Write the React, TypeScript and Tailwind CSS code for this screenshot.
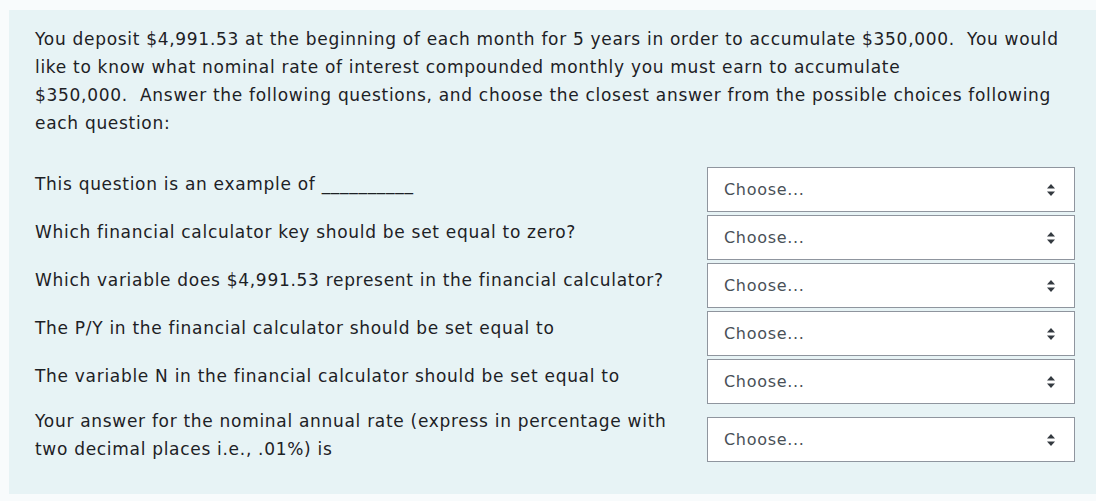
import React from 'react';

const questions = [
  'This question is an example of __________',
  'Which financial calculator key should be set equal to zero?',
  'Which variable does $4,991.53 represent in the financial calculator?',
  'The P/Y in the financial calculator should be set equal to',
  'The variable N in the financial calculator should be set equal to',
];

function SelectBox({ className = '' }: { className?: string }) {
  return (
    <div className={`flex h-[45px] w-[368px] shrink-0 items-center justify-between border border-[#8f959e] bg-white pl-4 pr-4 text-[16px] tracking-[0.7px] text-[#495057] ${className}`}>
      <span>Choose...</span>
      <svg width="10" height="14" viewBox="0 0 10 14" className="mr-[2px]">
        <path d="M5 1 L9 5.5 H1 Z" fill="#343a40" />
        <path d="M5 13 L9 8.5 H1 Z" fill="#343a40" />
      </svg>
    </div>
  );
}

export default function App() {
  return (
    <div
      className="min-h-[501px] w-[1096px] bg-[#f8fbfc] pt-[10px] pl-[9px] text-[#1d2125]"
      style={{ fontFamily: '"DejaVu Sans", "Open Sans", sans-serif' }}
    >
      <div className="h-[484px] bg-[#e7f3f5] pl-[26px] pt-[15px]">
        {/* Question text */}
        <p className="text-[17px] leading-[28px] tracking-[0.7px]">
          <span className="block whitespace-nowrap">You deposit $4,991.53 at the beginning of each month for 5 years in order to accumulate $350,000.&nbsp; You would</span>
          <span className="block whitespace-nowrap">like to know what nominal rate of interest compounded monthly you must earn to accumulate</span>
          <span className="block whitespace-nowrap">$350,000.&nbsp; Answer the following questions, and choose the closest answer from the possible choices following</span>
          <span className="block whitespace-nowrap">each question:</span>
        </p>

        {/* Matching rows */}
        <div className="mt-[30px] flex flex-col gap-[3px]">
          {questions.map((q) => (
            <div key={q} className="flex items-start">
              <div className="w-[672px] shrink-0 pt-[3px] text-[17px] leading-[28px] tracking-[0.7px]">{q}</div>
              <SelectBox />
            </div>
          ))}
          <div className="flex items-start">
            <div className="w-[672px] shrink-0 text-[17px] leading-[28px] tracking-[0.7px]">
              Your answer for the nominal annual rate (express in percentage with
              <br />
              two decimal places i.e., .01%) is
            </div>
            <SelectBox className="mt-[10px]" />
          </div>
        </div>
      </div>
    </div>
  );
}
